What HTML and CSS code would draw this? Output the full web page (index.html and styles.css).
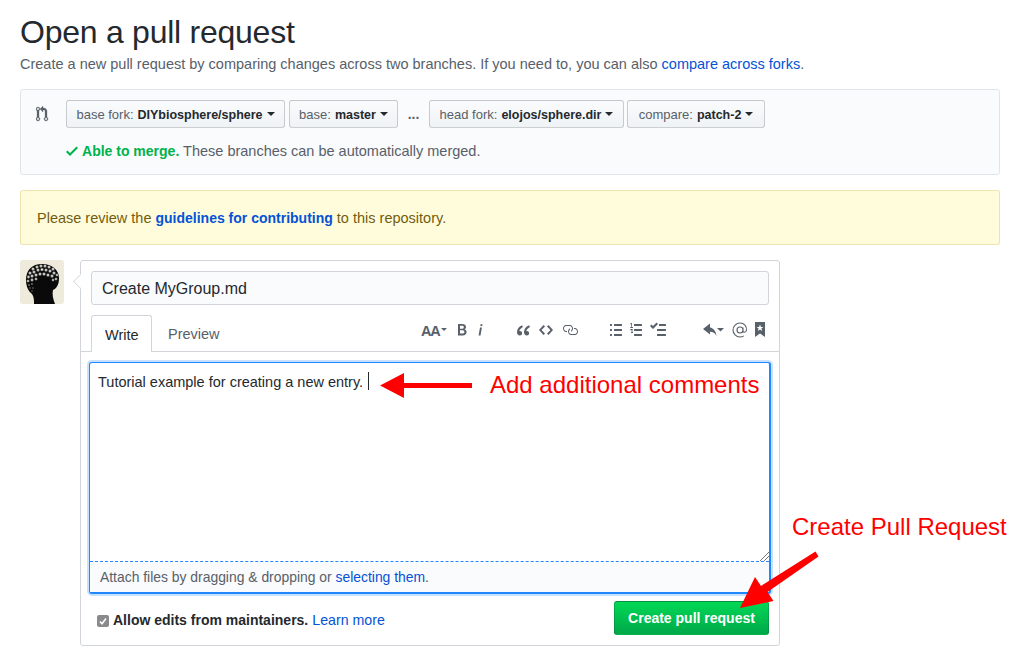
FILE: index.html
```html
<!DOCTYPE html>
<html lang="en">
<head>
<meta charset="utf-8">
<title>Open a pull request</title>
<link rel="stylesheet" href="styles.css">
</head>
<body>
<header class="head">
  <h1>Open a pull request</h1>
  <p>Create a new pull request by comparing changes across two branches. If you need to, you can also <a href="#">compare across forks</a>.</p>
</header>
<section class="range">
  <div class="range-row">
    <svg class="range-icon" viewBox="0 0 14 16" width="14" height="16"><path fill="#586069" stroke="#586069" stroke-width=".3" d="M11 11.28V5c-.03-.78-.34-1.47-.94-2.06C9.46 2.35 8.78 2.03 8 2H7V0L4 3l3 3V4h1c.27.02.48.11.69.31.21.2.3.42.31.69v6.28A1.993 1.993 0 0 0 10 15a1.993 1.993 0 0 0 1-3.72zm-1 2.92c-.66 0-1.2-.55-1.2-1.2 0-.65.55-1.2 1.2-1.2.65 0 1.2.55 1.2 1.2 0 .65-.55 1.2-1.2 1.2zM4 3c0-1.11-.89-2-2-2a1.993 1.993 0 0 0-1 3.72v6.56A1.993 1.993 0 0 0 2 15a1.993 1.993 0 0 0 1-3.72V4.72c.59-.34 1-.98 1-1.72zm-.8 10c0 .66-.55 1.2-1.2 1.2-.65 0-1.2-.55-1.2-1.2 0-.65.55-1.2 1.2-1.2.65 0 1.2.55 1.2 1.2zM2 4.2C1.34 4.2.8 3.65.8 3c0-.65.55-1.2 1.2-1.2.65 0 1.2.55 1.2 1.2 0 .65-.55 1.2-1.2 1.2z"/></svg>
    <button class="sel sel-a"><span>base fork:</span><b>DIYbiosphere/sphere</b><i class="caret"></i></button>
    <button class="sel sel-b"><span>base:</span><b>master</b><i class="caret"></i></button>
    <span class="dots">...</span>
    <button class="sel sel-c"><span>head fork:</span><b>elojos/sphere.dir</b><i class="caret"></i></button>
    <button class="sel sel-d"><span>compare:</span><b>patch-2</b><i class="caret"></i></button>
  </div>
  <div class="merge">
    <svg viewBox="0 0 12 16" width="12" height="16"><path fill="#00b24a" fill-rule="evenodd" d="M12 5l-8 8-4-4 1.5-1.5L4 10l6.5-6.5L12 5z"/></svg>
    <strong>Able to merge.</strong> These branches can be automatically merged.
  </div>
</section>
<div class="flash"><span>Please review the <a href="#">guidelines for contributing</a> to this repository.</span></div>
<main class="discussion">
  <div class="avatar">
    <svg viewBox="0 0 44 44" width="44" height="44">
      <rect width="44" height="44" fill="#efebdc"/>
      <path fill="#0a0a0a" d="M6 20C6 10 12 4 22 4c10 0 17 6 17 14 0 6-2 10-6 12-1 4 0 9 2 14H14c0-4 0-7-2-10-4-3-6-8-6-14z"/>
      <g fill="#dcdcd4" stroke="#333" stroke-width=".4">
        <circle cx="13" cy="9" r="1.500"/><circle cx="17" cy="7" r="1.500"/><circle cx="21" cy="6" r="1.500"/><circle cx="25" cy="6" r="1.500"/><circle cx="29" cy="7" r="1.500"/><circle cx="33" cy="9" r="1.500"/>
        <circle cx="10" cy="13" r="1.500"/><circle cx="14" cy="12" r="1.500"/><circle cx="18" cy="10" r="1.500"/><circle cx="22" cy="9.500" r="1.500"/><circle cx="26" cy="10" r="1.500"/><circle cx="30" cy="11" r="1.500"/><circle cx="34" cy="13" r="1.500"/><circle cx="37" cy="15" r="1.300"/>
        <circle cx="8.500" cy="17" r="1.400"/><circle cx="12" cy="16" r="1.500"/><circle cx="16" cy="15" r="1.500"/><circle cx="20" cy="14" r="1.500"/><circle cx="24" cy="14" r="1.500"/><circle cx="28" cy="15" r="1.500"/><circle cx="32" cy="16" r="1.500"/><circle cx="36" cy="19" r="1.300"/>
        <circle cx="8" cy="21" r="1.300"/><circle cx="12" cy="20" r="1.400"/><circle cx="16" cy="19" r="1.300"/><circle cx="33" cy="20" r="1.200"/>
      </g>
      <g fill="#777"><circle cx="9" cy="25" r=".9"/><circle cx="12" cy="24" r=".9"/><circle cx="10" cy="28" r=".8"/><circle cx="13" cy="28" r=".8"/><circle cx="12" cy="31" r=".7"/></g>
    </svg>
  </div>
  <form class="box">
    <div class="title-input">Create MyGroup.md</div>
    <div class="tabbar">
      <div class="tab active">Write</div>
      <div class="tab">Preview</div>
      <div class="toolbar">
        <div class="tgroup g1">
          <svg viewBox="0 0 26 16" width="26" height="16"><text class="aa" x="0" y="14">AA</text><path d="M20 6h6l-3 3z"/></svg>
          <svg viewBox="0 0 10 16" width="10" height="16"><path d="M1 2h4.200C7.600 2 9 3.100 9 4.900c0 1.100-.6 2-1.500 2.400C8.700 7.700 9.600 8.700 9.600 10c0 2-1.500 3.400-4 3.400H1V2zm2 1.800v2.900h1.900c1.100 0 1.900-.5 1.900-1.500S6 3.800 4.900 3.800H3zm0 4.500v3.300h2.200c1.300 0 2.200-.6 2.200-1.700S6.500 8.300 5.100 8.300H3z"/></svg>
          <svg viewBox="0 0 6 16" width="6" height="16"><path d="M3.600 2.300h1.900l-.3 1.600H3.300l.3-1.600zM3 5.400h1.900L3.500 13.400H1.600L3 5.400z"/></svg>
        </div>
        <div class="tgroup g2">
          <svg viewBox="0 0 14 16" width="14" height="16"><path d="M6.200 3.300C3.400 4.500 1 6.800 1 10c0 2 1.100 3.500 2.800 3.500 1.300 0 2.300-1 2.300-2.300S5.200 9 4 9c-.3 0-.5 0-.7.100.3-1.400 1.600-2.900 3.600-4L6.200 3.300zm7 0C10.400 4.500 8 6.800 8 10c0 2 1.100 3.500 2.800 3.500 1.300 0 2.300-1 2.300-2.300S12.200 9 11 9c-.3 0-.5 0-.7.100.3-1.400 1.600-2.900 3.600-4l-.7-1.800z"/></svg>
          <svg viewBox="0 0 14 16" width="14" height="16"><path d="M9.500 3L8 4.500 11.500 8 8 11.500 9.500 13 14 8 9.500 3zm-5 0L0 8l4.500 5L6 11.500 2.500 8 6 4.500 4.500 3z"/></svg>
          <svg viewBox="0 0 16 16" width="16" height="16"><path d="M4 9h1v1H4c-1.500 0-3-1.690-3-3.500S2.550 3 4 3h4c1.450 0 3 1.690 3 3.500 0 1.410-.91 2.720-2 3.250V8.590c.58-.45 1-1.270 1-2.090C10 5.220 8.980 4 8 4H4c-.98 0-2 1.220-2 2.500S3 9 4 9zm9-3h-1v1h1c1 0 2 1.220 2 2.500S13.980 12 13 12H9c-.98 0-2-1.220-2-2.500 0-.83.420-1.640 1-2.090V6.250c-1.090.530-2 1.840-2 3.250C6 11.310 7.550 13 9 13h4c1.450 0 3-1.690 3-3.500S14.500 6 13 6z"/></svg>
        </div>
        <div class="tgroup g3">
          <svg viewBox="0 0 12 16" width="12" height="16"><path d="M2 13c0 .59 0 1-.59 1H.59C0 14 0 13.590 0 13c0-.59 0-1 .59-1h.81c.59 0 .59.410.59 1H2zm2.590-9h6.810c.59 0 .59-.41.59-1 0-.59 0-1-.59-1H4.590C4 2 4 2.410 4 3c0 .59 0 1 .59 1zM1.410 7H.59C0 7 0 7.410 0 8c0 .59 0 1 .59 1h.81c.59 0 .59-.41.59-1 0-.59 0-1-.59-1H1.410zm0-5H.59C0 2 0 2.410 0 3c0 .59 0 1 .59 1h.81c.59 0 .59-.41.59-1 0-.59 0-1-.59-1h.01zm10 5H4.590C4 7 4 7.410 4 8c0 .59 0 1 .59 1h6.810c.59 0 .59-.41.59-1 0-.59 0-1-.59-1h.01zm0 5H4.590C4 12 4 12.410 4 13c0 .59 0 1 .59 1h6.810c.59 0 .59-.41.59-1 0-.59 0-1-.59-1h.01z"/></svg>
          <svg viewBox="0 0 12 16" width="12" height="16"><path d="M12 13c0 .59 0 1-.59 1H4.590C4 14 4 13.590 4 13c0-.59 0-1 .59-1h6.810c.59 0 .59.410.59 1H12zM4.590 4h6.810c.59 0 .59-.41.59-1 0-.59 0-1-.59-1H4.590C4 2 4 2.410 4 3c0 .59 0 1 .59 1zm6.820 3H4.590C4 7 4 7.410 4 8c0 .59 0 1 .59 1h6.810c.59 0 .59-.41.59-1 0-.59 0-1-.59-1h.01zM2 1h-.72C.98 1.190.7 1.360.25 1.640V2.490c.37-.21.66-.36 1-.55V5H.25v1h2.700V5H2V1zm.250 8.130c-.170 0-.420.030-.640.080V8.500c.29-.3.610-.5.820-.5.220 0 .42.010.42.230 0 .39-.7 1.150-1.890 1.900V11H3v-1H1.800c.56-.39 1.180-.89 1.180-1.720C2.980 7.400 2.380 7 1.700 7 1.200 7 .7 7.100.3 7.300v1.050c.4-.2 1.300-.22 1.950-.22z"/></svg>
          <svg viewBox="0 0 16 16" width="16" height="16"><path d="M15.410 9H7.590C7 9 7 8.590 7 8c0-.59 0-1 .59-1h7.810c.59 0 .59.410.59 1 0 .59 0 1-.59 1h.01zM9.590 4C9 4 9 3.590 9 3c0-.59 0-1 .59-1h5.810c.59 0 .59.410.59 1 0 .59 0 1-.59 1H9.590zM0 3.910l1.410-1.410L3 4.090 6.590.5 8 1.910l-5 5-3-3zM7.590 12h7.810c.59 0 .59.410.59 1 0 .59 0 1-.59 1H7.590C7 14 7 13.590 7 13c0-.59 0-1 .59-1z"/></svg>
        </div>
        <div class="tgroup g4">
          <svg viewBox="0 0 23 16" width="23" height="16"><path d="M8 3.500V1.500L1 7l7 5.500V9.800c3 0 5.200 1.200 6.500 4.200-.4-4.600-3-8-6.500-8.500V3.500z"/><path d="M15 6h7l-3.500 3.500z"/></svg>
          <svg viewBox="0 0 16 16" width="16" height="16"><path fill="none" stroke-width="1.100" stroke="#586069" d="M11 8a3 3 0 1 1-6 0 3 3 0 0 1 6 0zm0-2.600v3.900c0 1.200 2.900 1.500 3.400-.8C15.200 4 12 1 8 1a7 7 0 0 0 0 14c1.400 0 2.700-.4 3.800-1.100"/></svg>
          <svg viewBox="0 0 10 16" width="10" height="16"><path fill-rule="evenodd" d="M0 0h10v15l-5-3.500L0 15V0zm5 2.400L4 5H1.600l2 1.600L2.800 9 5 7.500 7.200 9l-.8-2.400 2-1.600H6L5 2.400z"/></svg>
        </div>
      </div>
    </div>
    <div class="editor">
      <div class="text-area">Tutorial example for creating a new entry.<span class="cursor"></span>
        <svg class="grip" viewBox="0 0 10 10" width="10" height="10"><path fill="none" stroke="#777" d="M1 10L10 1M5 10l5-5"/></svg>
      </div>
      <div class="attach">Attach files by dragging &amp; dropping or <a href="#">selecting them</a>.</div>
    </div>
    <div class="actions">
      <label class="allow"><span class="check"><svg viewBox="0 0 12 12" width="12" height="12"><path fill="none" stroke="#fff" stroke-width="1.600" d="M3 6.500L5 8.800 9 3.500"/></svg></span><b>Allow edits from maintainers.</b> <a href="#">Learn more</a></label>
      <button class="submit" type="button">Create pull request</button>
    </div>
  </form>
</main>
<div class="note note-a">Add additional comments</div>
<div class="note note-b">Create Pull Request</div>
<svg class="arrows" viewBox="0 0 1034 653" width="1034" height="653">
  <path fill="#ff0000" d="M472 383v5h-68v-5zM404 373v25l-24-12.500z"/>
  <path fill="#ff0000" d="M815.500 551.500l3 5-51 35.500 6 9-33.500 7 15-31 6 9z"/>
</svg>
</body>
</html>
```

FILE: styles.css
```css
* { box-sizing: border-box; }
html, body { margin: 0; height: 653px; overflow: hidden; }
body {
  position: relative;
  padding: 0 34px 0 20px;
  background: #fff;
  color: #24292e;
  font-family: "Liberation Sans", Arial, sans-serif;
  font-size: 14.5px;
}
a { color: #0552d6; text-decoration: none; }
.head { height: 89px; padding-top: 13px; }
h1 { margin: 0; font-size: 32px; line-height: 38px; font-weight: 400; letter-spacing: -.25px; }
.head p { margin: 3px 0 0; line-height: 21px; color: #586069; }
.range {
  height: 86px;
  border: 1px solid #e1e4e8;
  border-radius: 3px;
  background: #fafbfc;
  padding: 10px 15px;
}
.range-row { display: flex; align-items: center; height: 28px; }
.range-icon { margin-right: 16px; }
.sel {
  display: flex;
  align-items: baseline;
  justify-content: center;
  height: 28px;
  padding: 6px 0 0;
  border: 1px solid rgba(27,31,35,.2);
  border-radius: 3px;
  background: linear-gradient(#fafbfc, #eff3f6);
  font: 13px "Liberation Sans", Arial, sans-serif;
  color: #24292e;
  white-space: nowrap;
}
.sel span { color: #586069; margin-right: 4px; }
.sel b { font-size: 12.5px; font-weight: 700; }
.sel-a { width: 219px; margin-right: 4px; }
.sel-b { width: 109px; }
.sel-c { width: 195px; margin-right: 3px; }
.sel-d { width: 138px; }
.dots { width: 31px; text-align: center; font-weight: 700; color: #586069; font-size: 14px; }
.caret {
  align-self: center;
  display: block;
  margin: -6px 0 0 4px;
  border: 4px solid transparent;
  border-top-color: #24292e;
  border-bottom: 0;
}
.merge {
  height: 20px;
  margin: 13px 0 0 30px;
  line-height: 20px;
  color: #586069;
  white-space: nowrap;
}
.merge svg { vertical-align: -3px; }
.merge strong { color: #00b24a; font-size: 14px; }
.flash {
  height: 55px;
  margin-top: 15px;
  padding: 0 16px;
  display: flex;
  align-items: center;
  white-space: nowrap;
  border: 1px solid rgba(176,136,0,.2);
  border-radius: 3px;
  background: #fffcdc;
  color: #735c0f;
}
.flash a { font-weight: 700; font-size: 14px; }
.discussion { display: flex; margin-top: 15px; }
.avatar { width: 44px; height: 44px; border-radius: 3px; overflow: hidden; margin-right: 16px; }
.avatar svg { display: block; }
.box {
  position: relative;
  width: 700px;
  height: 386px;
  padding: 10px;
  border: 1px solid #d1d5da;
  border-radius: 3px;
  background: #fff;
}
.box::before {
  content: "";
  position: absolute;
  left: -7px;
  top: 14px;
  width: 12px;
  height: 12px;
  background: #fff;
  border-left: 1px solid #d1d5da;
  border-bottom: 1px solid #d1d5da;
  transform: rotate(45deg) scale(.8);
}
.title-input {
  height: 34px;
  padding: 0 10px;
  line-height: 34px;
  font-size: 16px;
  border: 1px solid #d1d5da;
  border-radius: 3px;
  background: #fafbfc;
}
.tabbar {
  display: flex;
  height: 47px;
  margin: 0 -10px;
  padding: 10px 10px 0;
  border-bottom: 1px solid #d1d5da;
}
.tab {
  height: 36px;
  padding: 0 13px;
  line-height: 38px;
  color: #586069;
  margin-right: 3px;
}
.tab.active {
  width: 61px;
  height: 37px;
  color: #24292e;
  background: #fff;
  border: 1px solid #d1d5da;
  border-bottom: 0;
  border-radius: 3px 3px 0 0;
}
.toolbar { display: flex; align-items: center; margin-left: auto; height: 29px; margin-right: 4px; }
.toolbar svg { display: block; fill: #586069; }
.aa { font: 700 14.500px "Liberation Sans", Arial, sans-serif; letter-spacing: -1.200px; fill: #586069; }
.tgroup { display: flex; align-items: center; }
.g1 { gap: 10px; margin-right: 33px; }
.g2 { gap: 9px; margin-right: 32px; }
.g3 { gap: 8px; margin-right: 36px; }
.g4 { gap: 7px; }
.editor {
  height: 232px;
  margin: 10px -2px 0;
  border: 2px solid #2188ff;
  border-width: 1px 2px 2px 1px;
  border-radius: 3px;
  box-shadow: 0 0 0 2px rgba(33,136,255,.25);
  background: #fff;
  display: flex;
  flex-direction: column;
}
.text-area {
  position: relative;
  height: 199px;
  padding: 9px 8px;
  line-height: 20px;
  white-space: pre;
  border-bottom: 1px dashed #2188ff;
}
.cursor {
  display: inline-block;
  width: 1px;
  height: 18px;
  margin-left: 5px;
  background: #24292e;
  vertical-align: -3px;
}
.grip { position: absolute; right: 0; bottom: 0; }
.attach {
  flex: 1;
  padding: 0 10px;
  line-height: 30px;
  font-size: 13.900px;
  color: #586069;
  background: #fafbfc;
}
.actions {
  display: flex;
  align-items: center;
  justify-content: space-between;
  height: 34px;
  margin-top: 7px;
}
.allow { display: block; white-space: nowrap; padding: 4px 0 0 6px; }
.allow b { color: #24292e; font-size: 14px; }
.allow a { font-size: 14.200px; }
.check {
  display: inline-block;
  width: 12px;
  height: 12px;
  margin-right: 4px;
  border-radius: 2px;
  background: #8a8a8c;
  vertical-align: -2px;
}
.check svg { display: block; }
.submit {
  width: 155px;
  height: 34px;
  padding: 0;
  border: 1px solid rgba(27,31,35,.2);
  border-radius: 3px;
  background: linear-gradient(#00d856, #00a848);
  color: #fff;
  font: 700 14px "Liberation Sans", Arial, sans-serif;
}
.note {
  position: absolute;
  color: #ff0000;
  font-size: 24px;
  line-height: 28px;
  white-space: nowrap;
}
.note-a { left: 490px; top: 371px; }
.note-b { left: 792px; top: 513px; }
.arrows { position: absolute; left: 0; top: 0; pointer-events: none; }
```
